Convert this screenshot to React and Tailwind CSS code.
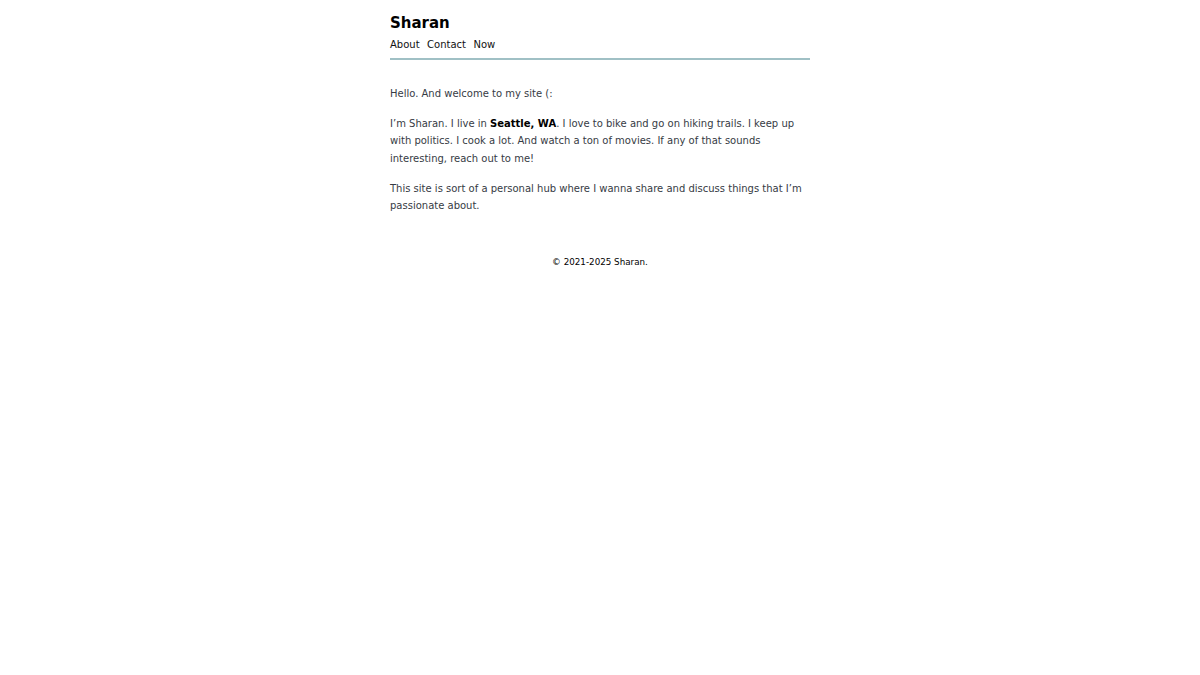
export default function App() {
  return (
    <div className="min-h-screen bg-white font-['DejaVu_Sans',sans-serif]">
      <div className="mx-auto w-[420px] pt-[13px]">
        {/* Header */}
        <header className="border-b-2 border-[#a0c0c5] pb-[6px]">
          <h1 className="text-[15px] font-bold leading-[20px] text-black">Sharan</h1>
          <nav className="mt-[4.5px] flex gap-[7.5px] text-[10px] leading-[14px] text-[#111]">
            <a href="#">About</a>
            <a href="#">Contact</a>
            <a href="#">Now</a>
          </nav>
        </header>

        {/* Intro */}
        <main className="mt-[25px] space-y-[12.5px] text-[10px] leading-[17.5px] text-[#363b44]">
          <p>Hello. And welcome to my site (:</p>
          <p>
            I’m Sharan. I live in <strong className="font-bold text-black">Seattle, WA</strong>. I love to
            bike and go on hiking trails. I keep up with politics. I cook a lot. And watch a ton of movies.
            If any of that sounds interesting, reach out to me!
          </p>
          <p>
            This site is sort of a personal hub where I wanna share and discuss things that I’m passionate
            about.
          </p>
        </main>

        <footer className="mt-[41px] text-center text-[8.75px] leading-[13px] text-black">
          © 2021-2025 Sharan.
        </footer>
      </div>
    </div>
  )
}
